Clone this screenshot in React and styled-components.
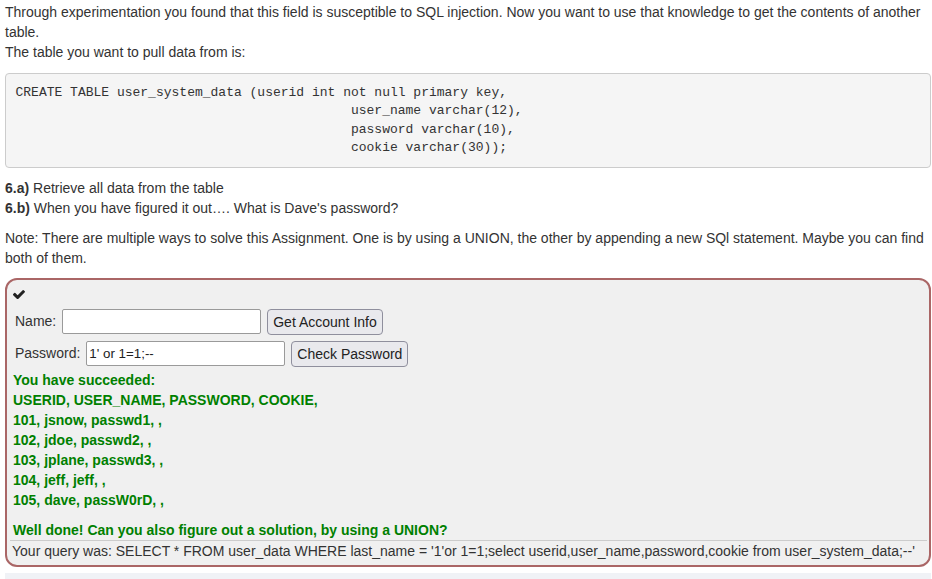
import styled, { createGlobalStyle } from 'styled-components';

const GlobalStyle = createGlobalStyle`
  html, body {
    margin: 0;
    padding: 0;
    background: #fff;
  }
  body {
    font-family: "Liberation Sans", Arial, Helvetica, sans-serif;
    font-size: 14px;
    line-height: 20px;
    color: #333;
  }
`;

const Page = styled.div`
  padding: 2px 1px 0 5px;
`;

const Para = styled.p`
  margin: 0 0 ${({ $gap }) => $gap || 10}px;
`;

const Code = styled.pre`
  margin: 0 0 10px;
  padding: 9.5px;
  font-family: "Liberation Mono", "DejaVu Sans Mono", monospace;
  font-size: 13px;
  line-height: 18.5px;
  color: #333;
  background: #f5f5f5;
  border: 1px solid #ccc;
  border-radius: 4px;
  white-space: pre;
`;

const AttackBox = styled.div`
  background: #f0f0f0;
  border: 2px solid #a66;
  border-radius: 12px;
  padding: 0 2px 4px 6px;
`;

const Header = styled.div`
  height: 29px;
  display: flex;
  align-items: flex-start;
  padding-top: 10px;
  box-sizing: border-box;
`;

const Form = styled.div`
  display: flex;
  flex-direction: column;
  gap: 6px;
  padding-left: 2px;
`;

const Row = styled.div`
  display: flex;
  align-items: flex-start;
  gap: 6px;
  height: 26px;
`;

const Label = styled.span`
  line-height: 25px;
`;

const Input = styled.input`
  box-sizing: border-box;
  width: 199px;
  height: 25px;
  margin: 0;
  padding: 1px 2px;
  border: 1px solid #9a9a9a;
  border-radius: 2px;
  background: #fff;
  font-family: "Liberation Sans", Arial, sans-serif;
  font-size: 13.33px;
  color: #222;
  outline: none;
`;

const Button = styled.button`
  box-sizing: border-box;
  height: 26px;
  margin: 0;
  padding: 1px 5px;
  border: 1px solid #8f8f9d;
  border-radius: 4px;
  background: #e9e9ed;
  font-family: "Liberation Sans", Arial, sans-serif;
  font-size: 14px;
  color: #222;
  cursor: pointer;
`;

const Feedback = styled.div`
  margin-top: 3px;
  color: #008000;
  font-weight: bold;
`;

const FeedbackLine = styled.div`
  height: 20px;
`;

const Hint = styled.p`
  margin: 10px 0 0;
  color: #008000;
  font-weight: bold;
`;

const Output = styled.div`
  margin: 0 0 0 -3px;
  padding-left: 2px;
  border-top: 1px solid #ccc;
  white-space: nowrap;
`;

const Strip = styled.div`
  margin-top: 6px;
  height: 12px;
  background: #f0f2f6;
`;

const CheckIcon = () => (
  <svg width="12" height="9.3" viewBox="121 334 1550 1188" fill="#222">
    <path d="M1671 566q0 40-28 68l-724 724-136 136q-28 28-68 28t-68-28l-136-136-362-362q-28-28-28-68t28-68l136-136q28-28 68-28t68 28l294 295 656-657q28-28 68-28t68 28l136 136q28 28 28 68z" />
  </svg>
);

const indent = ' '.repeat(43);
const sql = [
  'CREATE TABLE user_system_data (userid int not null primary key,',
  `${indent}user_name varchar(12),`,
  `${indent}password varchar(10),`,
  `${indent}cookie varchar(30));`,
].join('\n');

const rows = [
  'You have succeeded:',
  'USERID, USER_NAME, PASSWORD, COOKIE,',
  '101, jsnow, passwd1, ,',
  '102, jdoe, passwd2, ,',
  '103, jplane, passwd3, ,',
  '104, jeff, jeff, ,',
  '105, dave, passW0rD, ,',
];

export default function App() {
  return (
    <>
      <GlobalStyle />
      <Page>
        <Para $gap={11}>
          Through experimentation you found that this field is susceptible to SQL injection. Now you want to use that
          knowledge to get the contents of another table.
          <br />
          The table you want to pull data from is:
        </Para>
        <Code>{sql}</Code>
        <Para>
          <b>6.a)</b> Retrieve all data from the table
          <br />
          <b>6.b)</b> When you have figured it out…. What is Dave's password?
        </Para>
        <Para $gap={10}>
          Note: There are multiple ways to solve this Assignment. One is by using a UNION, the other by appending a new
          SQl statement. Maybe you can find both of them.
        </Para>
        <AttackBox>
          <Header>
            <CheckIcon />
          </Header>
          <Form>
            <Row>
              <Label>Name:</Label>
              <Input type="text" defaultValue="" />
              <Button>Get Account Info</Button>
            </Row>
            <Row>
              <Label>Password:</Label>
              <Input type="text" defaultValue="1' or 1=1;--" />
              <Button>Check Password</Button>
            </Row>
          </Form>
          <Feedback>
            {rows.map((r) => (
              <FeedbackLine key={r}>{r}</FeedbackLine>
            ))}
          </Feedback>
          <Hint>Well done! Can you also figure out a solution, by using a UNION?</Hint>
          <Output>
            Your query was: SELECT * FROM user_data WHERE last_name = '1'or 1=1;select
            userid,user_name,password,cookie from user_system_data;--'
          </Output>
        </AttackBox>
        <Strip />
      </Page>
    </>
  );
}
